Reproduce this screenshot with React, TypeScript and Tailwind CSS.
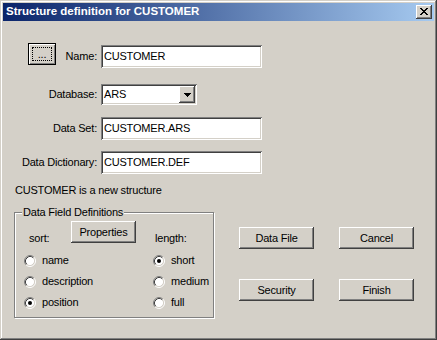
import React from "react";

const raised =
  "bg-[#d4d0c8] shadow-[inset_-1px_-1px_0_#404040,inset_1px_1px_0_#ffffff,inset_-2px_-2px_0_#808080]";
const sunken =
  "bg-white shadow-[inset_1px_1px_0_#808080,inset_-1px_-1px_0_#ffffff,inset_2px_2px_0_#404040,inset_-2px_-2px_0_#d4d0c8]";

function Radio({ checked }: { checked?: boolean }) {
  return (
    <svg width="12" height="12" viewBox="0 0 12 12" className="shrink-0">
      <circle cx="6" cy="6" r="4.5" fill="#ffffff" />
      <path d="M2.11 9.89 A5.5 5.5 0 0 1 9.89 2.11" stroke="#808080" strokeWidth="1" fill="none" />
      <path d="M9.89 2.11 A5.5 5.5 0 0 1 2.11 9.89" stroke="#ffffff" strokeWidth="1" fill="none" />
      <path d="M2.82 9.18 A4.5 4.5 0 0 1 9.18 2.82" stroke="#404040" strokeWidth="1" fill="none" />
      <path d="M9.18 2.82 A4.5 4.5 0 0 1 2.82 9.18" stroke="#d4d0c8" strokeWidth="1" fill="none" />
      {checked && <circle cx="6" cy="6" r="2" fill="#000000" />}
    </svg>
  );
}

function RadioRow({ label, checked }: { label: string; checked?: boolean }) {
  return (
    <div className="h-[21px] flex items-center gap-[6px]">
      <Radio checked={checked} />
      <span className="leading-[13px]">{label}</span>
    </div>
  );
}

function Btn({ label, className = "" }: { label: string; className?: string }) {
  return (
    <button className={`${raised} h-[22px] flex items-center justify-center leading-[13px] ${className}`}>
      {label}
    </button>
  );
}

function FieldRow({
  label,
  value,
  className = "",
}: {
  label: string;
  value: string;
  className?: string;
}) {
  return (
    <div className={`flex items-start ${className}`}>
      <div className="w-[94px] h-[23px] flex items-center justify-end">{label}</div>
      <div className={`${sunken} ml-[4px] w-[161px] h-[23px] flex items-center pl-[3px]`}>{value}</div>
    </div>
  );
}

export default function App() {
  return (
    <div className="w-[437px] h-[340px] bg-[#d4d0c8] p-[3px] flex flex-col overflow-hidden font-['Liberation_Sans',Arial,sans-serif] text-[11px] text-black tracking-[-0.2px] shadow-[inset_-1px_-1px_0_#404040,inset_1px_1px_0_#d4d0c8,inset_-2px_-2px_0_#808080,inset_2px_2px_0_#ffffff]">
      {/* Title bar */}
      <div className="h-[18px] shrink-0 flex items-center justify-between pl-[3px] pr-[2px] bg-[linear-gradient(to_right,#0a246a,#a6caf0)]">
        <span className="text-white font-bold text-[11.5px] tracking-normal leading-none">
          Structure definition for CUSTOMER
        </span>
        <button className={`${raised} w-[16px] h-[14px] flex items-start justify-start`}>
          <svg width="8" height="7" viewBox="0 0 8 7" className="ml-[4px] mt-[3px]" shapeRendering="crispEdges">
            <rect x="0" y="0" width="2" height="1" fill="#000" />
            <rect x="6" y="0" width="2" height="1" fill="#000" />
            <rect x="1" y="1" width="2" height="1" fill="#000" />
            <rect x="5" y="1" width="2" height="1" fill="#000" />
            <rect x="2" y="2" width="4" height="1" fill="#000" />
            <rect x="3" y="3" width="2" height="1" fill="#000" />
            <rect x="2" y="4" width="4" height="1" fill="#000" />
            <rect x="1" y="5" width="2" height="1" fill="#000" />
            <rect x="5" y="5" width="2" height="1" fill="#000" />
            <rect x="0" y="6" width="2" height="1" fill="#000" />
            <rect x="6" y="6" width="2" height="1" fill="#000" />
          </svg>
        </button>
      </div>

      {/* Body */}
      <div className="flex flex-col pt-[22px]">
        {/* Name row */}
        <div className="flex items-start">
          <div className="w-[94px] flex items-start">
            <button className="ml-[25px] w-[28px] h-[22px] border border-black bg-[#d4d0c8] shadow-[inset_1px_1px_0_#ffffff,inset_-1px_-1px_0_#808080] p-[3px] flex">
              <div className="flex-1 border border-dotted border-black flex items-center justify-center leading-[13px]">
                ...
              </div>
            </button>
            <div className="flex-1 h-[23px] mt-[2px] flex items-center justify-end">Name:</div>
          </div>
          <div className={`${sunken} ml-[4px] mt-[2px] w-[161px] h-[23px] flex items-center pl-[3px]`}>
            CUSTOMER
          </div>
        </div>

        {/* Database row */}
        <div className="flex items-start mt-[16px]">
          <div className="w-[94px] h-[21px] flex items-center justify-end">Database:</div>
          <div className={`${sunken} ml-[4px] w-[96px] h-[21px] p-[2px] flex items-center`}>
            <span className="flex-1 pl-[1px]">ARS</span>
            <div className={`${raised} w-[16px] h-[17px] flex items-center justify-center`}>
              <svg width="7" height="4" viewBox="0 0 7 4" shapeRendering="crispEdges">
                <rect x="0" y="0" width="7" height="1" fill="#000" />
                <rect x="1" y="1" width="5" height="1" fill="#000" />
                <rect x="2" y="2" width="3" height="1" fill="#000" />
                <rect x="3" y="3" width="1" height="1" fill="#000" />
              </svg>
            </div>
          </div>
        </div>

        <FieldRow label="Data Set:" value="CUSTOMER.ARS" className="mt-[12px]" />
        <FieldRow label="Data Dictionary:" value="CUSTOMER.DEF" className="mt-[11px]" />

        <div className="mt-[10px] pl-[12px] h-[13px] leading-[13px]">CUSTOMER is a new structure</div>

        {/* Bottom section */}
        <div className="mt-[15px] flex items-start">
          <div className="relative ml-[11px] w-[200px] h-[106px] border border-[#808080] shadow-[inset_1px_1px_0_#ffffff,1px_1px_0_#ffffff] pt-[8px]">
            <span className="absolute left-[7px] top-[-7px] px-[1px] bg-[#d4d0c8] leading-[13px]">
              Data Field Definitions
            </span>
            <div className="flex items-start">
              <div className="w-[56px] pl-[14px] mt-[11px] leading-[13px]">sort:</div>
              <Btn label="Properties" className="w-[65px]" />
              <div className="ml-[19px] mt-[11px] leading-[13px]">length:</div>
            </div>
            <div className="flex mt-[5px]">
              <div className="w-[138px] pl-[9px] flex flex-col">
                <RadioRow label="name" />
                <RadioRow label="description" />
                <RadioRow label="position" checked />
              </div>
              <div className="flex flex-col">
                <RadioRow label="short" checked />
                <RadioRow label="medium" />
                <RadioRow label="full" />
              </div>
            </div>
          </div>

          <div className="ml-[25px] mt-[15px] grid grid-cols-[75px_75px] gap-x-[25px] gap-y-[30px]">
            <Btn label="Data File" />
            <Btn label="Cancel" />
            <Btn label="Security" />
            <Btn label="Finish" />
          </div>
        </div>
      </div>
    </div>
  );
}
